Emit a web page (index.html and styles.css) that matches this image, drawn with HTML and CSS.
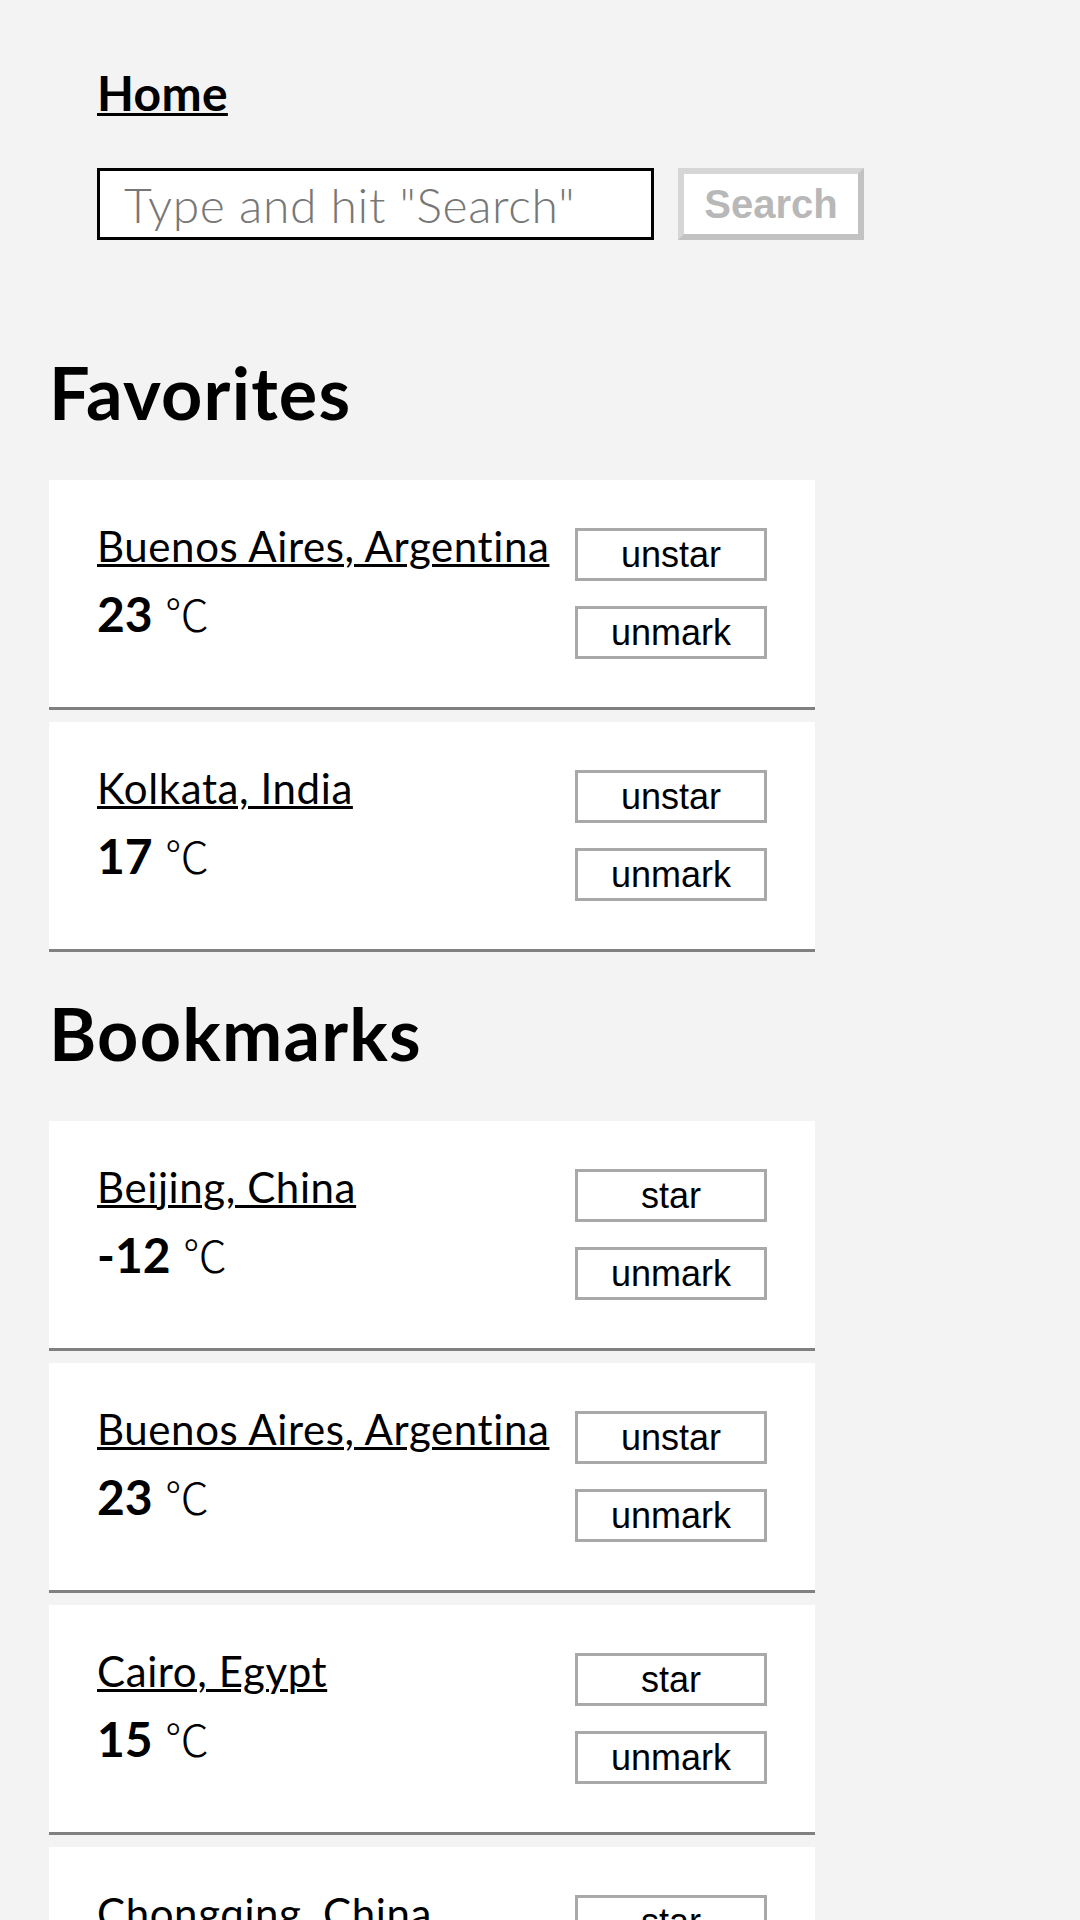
FILE: index.html
```html
<!DOCTYPE html>
<html lang="en">
<head>
<meta charset="utf-8">
<title>Weather</title>
<link rel="stylesheet" href="styles.css">
</head>
<body>
<div class="page">
  <header class="top">
    <a class="home" href="#">Home</a>
    <form class="search">
      <input class="search-input" type="text" placeholder="Type and hit &quot;Search&quot;">
      <button class="search-btn" type="button" disabled>Search</button>
    </form>
  </header>

  <section class="group group-first">
    <h2 class="group-title">Favorites</h2>
    <ul class="cards">
      <li class="card">
        <div class="info">
          <div class="city-line"><a class="city" href="#">Buenos Aires, Argentina</a></div>
          <div class="temp"><span class="temp-value">23</span> <span class="temp-unit">℃</span></div>
        </div>
        <div class="actions">
          <button class="action" type="button">unstar</button>
          <button class="action" type="button">unmark</button>
        </div>
      </li>
      <li class="card">
        <div class="info">
          <div class="city-line"><a class="city" href="#">Kolkata, India</a></div>
          <div class="temp"><span class="temp-value">17</span> <span class="temp-unit">℃</span></div>
        </div>
        <div class="actions">
          <button class="action" type="button">unstar</button>
          <button class="action" type="button">unmark</button>
        </div>
      </li>
    </ul>
  </section>

  <section class="group">
    <h2 class="group-title">Bookmarks</h2>
    <ul class="cards">
      <li class="card">
        <div class="info">
          <div class="city-line"><a class="city" href="#">Beijing, China</a></div>
          <div class="temp"><span class="temp-value">-12</span> <span class="temp-unit">℃</span></div>
        </div>
        <div class="actions">
          <button class="action" type="button">star</button>
          <button class="action" type="button">unmark</button>
        </div>
      </li>
      <li class="card">
        <div class="info">
          <div class="city-line"><a class="city" href="#">Buenos Aires, Argentina</a></div>
          <div class="temp"><span class="temp-value">23</span> <span class="temp-unit">℃</span></div>
        </div>
        <div class="actions">
          <button class="action" type="button">unstar</button>
          <button class="action" type="button">unmark</button>
        </div>
      </li>
      <li class="card">
        <div class="info">
          <div class="city-line"><a class="city" href="#">Cairo, Egypt</a></div>
          <div class="temp"><span class="temp-value">15</span> <span class="temp-unit">℃</span></div>
        </div>
        <div class="actions">
          <button class="action" type="button">star</button>
          <button class="action" type="button">unmark</button>
        </div>
      </li>
      <li class="card">
        <div class="info">
          <div class="city-line"><a class="city" href="#">Chongqing, China</a></div>
          <div class="temp"><span class="temp-value">9</span> <span class="temp-unit">℃</span></div>
        </div>
        <div class="actions">
          <button class="action" type="button">star</button>
          <button class="action" type="button">unmark</button>
        </div>
      </li>
    </ul>
  </section>
</div>
</body>
</html>
```

FILE: styles.css
```css
* {
  box-sizing: border-box;
}

html, body {
  margin: 0;
  background: #f3f3f3;
}

body {
  font-family: Lato, "Noto Sans", sans-serif;
  color: #000;
}

.page {
  width: 815px;
  padding-left: 49px;
  padding-bottom: 40px;
}

/* header */
.top {
  padding: 69px 0 0 48px;
  width: 1000px;
}

.home {
  display: block;
  width: max-content;
  font-size: 48px;
  font-weight: 700;
  line-height: 48px;
  letter-spacing: 0.3px;
  color: #000;
  text-decoration: underline;
  text-decoration-thickness: 3px;
}

.search {
  display: flex;
  gap: 24px;
  margin: 51px 0 0;
  height: 72px;
}

.search-input {
  flex: none;
  width: 557px;
  height: 72px;
  border: 3px solid #000;
  border-radius: 0;
  padding: 0 24px;
  font-family: Lato, "Noto Sans", sans-serif;
  font-weight: 300;
  font-size: 48px;
  letter-spacing: 0.6px;
  background: #fff;
  outline: none;
}

.search-input::placeholder {
  color: #777;
}

.search-btn {
  flex: none;
  width: 186px;
  height: 72px;
  padding: 0;
  border-width: 6px;
  border-style: solid;
  border-color: #d6d6d6 #c2c2c2 #c2c2c2 #d6d6d6;
  border-radius: 0;
  background: #fff;
  color: #b8b8b8;
  font-family: "Liberation Sans", Arial, sans-serif;
  font-weight: 700;
  font-size: 40px;
}

/* groups */
.group {
  margin-top: 45px;
}

.group-first {
  margin-top: 116px;
}

.group-title {
  margin: 0 0 52px;
  font-size: 72px;
  line-height: 72px;
  font-weight: 700;
  letter-spacing: 1.2px;
}

.cards {
  list-style: none;
  margin: 0;
  padding: 0;
  display: flex;
  flex-direction: column;
  gap: 12px;
}

.card {
  display: flex;
  gap: 25px;
  padding: 48px;
  background: #fff;
  border-bottom: 3px solid #808080;
}

.info {
  flex: 1;
  min-width: 0;
}

.city-line {
  line-height: 36px;
  font-size: 42px;
}

.city {
  color: #000;
  text-decoration: underline;
  text-decoration-thickness: 3px;
  letter-spacing: 0.6px;
  white-space: nowrap;
}

.temp {
  margin-top: 25px;
  font-size: 48px;
  line-height: 48px;
}

.temp-value {
  font-weight: 700;
}

.temp-unit {
  font-family: "Noto Sans CJK JP", sans-serif;
  font-weight: 300;
  font-size: 44px;
}

.actions {
  display: flex;
  flex-direction: column;
  gap: 25px;
  width: 192px;
  flex: none;
}

.action {
  height: 53px;
  padding: 0;
  border: 3px solid #a9a9a9;
  border-radius: 0;
  background: #fff;
  color: #000;
  font-family: "Liberation Sans", Arial, sans-serif;
  font-size: 36px;
}
```
